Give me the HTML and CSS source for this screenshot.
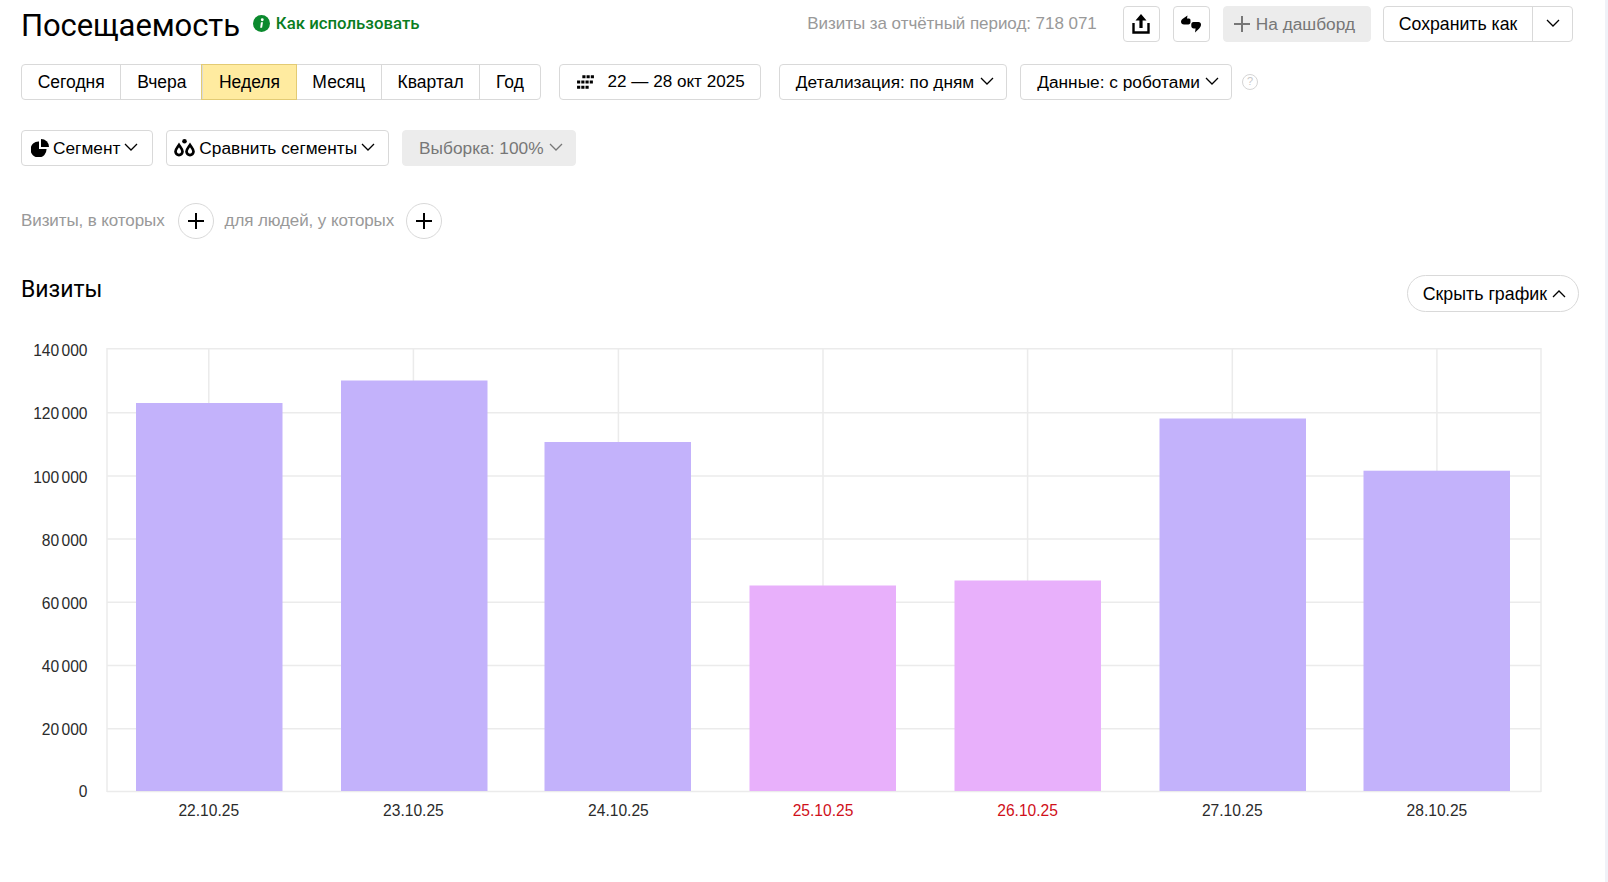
FILE: index.html
```html
<!DOCTYPE html>
<html lang="ru">
<head>
<meta charset="utf-8">
<title>Посещаемость</title>
<link rel="stylesheet" href="styles.css">
</head>
<body>
<svg class="defs" width="0" height="0" aria-hidden="true">
  <symbol id="chev" viewBox="0 0 14 8"><path d="M1 1l6 6 6-6" fill="none" stroke="currentColor" stroke-width="1.3"/></symbol>
  <symbol id="plus" viewBox="0 0 16 16"><path d="M8 0v16M0 8h16" fill="none" stroke="currentColor" stroke-width="2"/></symbol>
</svg>
<div class="layout">
<main class="page">
  <header class="row row-top">
    <h1 class="title">Посещаемость</h1>
    <a class="help">
      <svg class="help-ico" viewBox="0 0 18 18"><circle cx="9" cy="9" r="9" fill="#0b8a2e"/><circle cx="9.800" cy="5" r="1.500" fill="#fff"/><path d="M8.400 7.600h2.200l-1 5.800H7.600z" fill="#fff"/></svg>
      Как использовать
    </a>
    <span class="spacer"></span>
    <span class="stat">Визиты за отчётный период: 718 071</span>
    <button class="btn btn-icon">
      <svg class="ico" viewBox="0 0 18 20"><path d="M9 0L3.500 6.500H7.400V14h3.200V6.500h3.900z" fill="#000"/><path d="M1.500 9v9.500h15V9" fill="none" stroke="#000" stroke-width="2.400"/></svg>
    </button>
    <button class="btn btn-icon">
      <svg class="ico ico-quote" viewBox="0 0 20 18"><path d="M6.500 0.500L6 3.500H8c1 0 1.500.8 1.500 2V7c0 1.500-.8 2.500-2.200 2.500H3C1.200 9.500 0 8.300 0 6.700c0-1.500 1-2.700 2.500-3.500z" fill="#000"/><path d="M12.500 7H17.500C19 7 20 8 20 9.500c0 1.600-.8 3-2 4.200L14 17.500l.6-4H12.800c-1.500 0-2.500-1-2.500-2.500V9.300C10.300 8 11 7 12.500 7z" fill="#000"/></svg>
    </button>
    <button class="btn btn-muted btn-dash">
      <svg class="ico-plus" viewBox="0 0 16 16"><use href="#plus"/></svg>
      На дашборд
    </button>
    <div class="group group-save">
      <button class="seg seg-save">Сохранить как</button>
      <button class="seg seg-arrow"><svg class="chev" viewBox="0 0 14 8"><use href="#chev"/></svg></button>
    </div>
  </header>

  <div class="row row-period">
    <div class="group group-period">
      <button class="seg">Сегодня</button>
      <button class="seg">Вчера</button>
      <button class="seg seg-active">Неделя</button>
      <button class="seg">Месяц</button>
      <button class="seg">Квартал</button>
      <button class="seg">Год</button>
    </div>
    <button class="btn btn-date">
      <svg class="ico-cal" viewBox="0 0 18 13" fill="#000"><path d="M6 0h3v3H6zM10 0h3v3h-3zM14 0h3v3h-3zM1 5h3v3H1zM5 5h3v3H5zM9 5h3v3H9zM13 5h3v3h-3zM1 10h3v3H1zM5 10h3v3H5zM9 10h3v3H9z"/></svg>
      22 — 28 окт 2025
    </button>
    <button class="btn btn-detail">Детализация: по дням <svg class="chev" viewBox="0 0 14 8"><use href="#chev"/></svg></button>
    <button class="btn">Данные: с роботами <svg class="chev" viewBox="0 0 14 8"><use href="#chev"/></svg></button>
    <span class="question">?</span>
  </div>

  <div class="row row-segments">
    <button class="btn btn-seg">
      <svg class="ico-seg" viewBox="0 0 18 18"><path d="M8 2.500a8 8 0 1 0 7.500 7.500H8z" fill="#000"/><path d="M10 0a8 8 0 0 1 8 8h-8z" fill="#000"/></svg>
      Сегмент <svg class="chev" viewBox="0 0 14 8"><use href="#chev"/></svg>
    </button>
    <button class="btn btn-compare">
      <svg class="ico-drops" viewBox="0 0 21 18"><circle cx="10.500" cy="2.300" r="2.300" fill="#000"/><path d="M5 6c1.900 2.800 3.500 4.300 3.500 6.600a3.500 3.500 0 0 1-7 0C1.500 10.300 3.100 8.800 5 6z" fill="none" stroke="#000" stroke-width="2.700"/><path d="M16 6c1.900 2.800 3.500 4.300 3.500 6.600a3.500 3.500 0 0 1-7 0c0-2.300 1.600-3.800 3.500-6.600z" fill="none" stroke="#000" stroke-width="2.700"/></svg>
      Сравнить сегменты <svg class="chev" viewBox="0 0 14 8"><use href="#chev"/></svg>
    </button>
    <button class="btn btn-muted">Выборка: 100% <svg class="chev" viewBox="0 0 14 8"><use href="#chev"/></svg></button>
  </div>

  <div class="row row-conditions">
    <span class="cond">Визиты, в которых</span>
    <button class="round"><svg class="ico-plus" viewBox="0 0 16 16"><use href="#plus"/></svg></button>
    <span class="cond">для людей, у которых</span>
    <button class="round"><svg class="ico-plus" viewBox="0 0 16 16"><use href="#plus"/></svg></button>
  </div>

  <div class="row row-heading">
    <h2 class="heading">Визиты</h2>
    <button class="btn btn-pill">Скрыть график <svg class="chev chev-up" viewBox="0 0 14 8"><use href="#chev"/></svg></button>
  </div>

  <svg class="chart" viewBox="0 340 1605 530" width="1605" height="530">
    <g class="grid">
      <path d="M107 348.800H1541M107 412.700H1541M107 475.900H1541M107 539.100H1541M107 602.300H1541M107 665.500H1541M107 728.700H1541M107 791.500H1541"/>
      <path d="M107 348V792M208.800 348V792M413.400 348V792M618.400 348V792M823 348V792M1027.600 348V792M1232.300 348V792M1436.900 348V792M1541 348V792"/>
    </g>
    <g class="bars">
      <rect x="136" y="403" width="146.500" height="388"/>
      <rect x="341" y="380.500" width="146.500" height="410.500"/>
      <rect x="544.500" y="442" width="146.500" height="349"/>
      <rect class="off" x="749.500" y="585.500" width="146.500" height="205.500"/>
      <rect class="off" x="954.500" y="580.500" width="146.500" height="210.500"/>
      <rect x="1159.500" y="418.500" width="146.500" height="372.500"/>
      <rect x="1363.500" y="470.700" width="146.500" height="320.300"/>
    </g>
    <g class="ylabels">
      <text x="87.500" y="355.800">140 000</text>
      <text x="87.500" y="418.800">120 000</text>
      <text x="87.500" y="482.700">100 000</text>
      <text x="87.500" y="545.800">80 000</text>
      <text x="87.500" y="608.800">60 000</text>
      <text x="87.500" y="671.800">40 000</text>
      <text x="87.500" y="734.800">20 000</text>
      <text x="87.500" y="797">0</text>
    </g>
    <g class="xlabels">
      <text x="208.800" y="815.800">22.10.25</text>
      <text x="413.400" y="815.800">23.10.25</text>
      <text x="618.400" y="815.800">24.10.25</text>
      <text class="red" x="823" y="815.800">25.10.25</text>
      <text class="red" x="1027.600" y="815.800">26.10.25</text>
      <text x="1232.300" y="815.800">27.10.25</text>
      <text x="1436.900" y="815.800">28.10.25</text>
    </g>
  </svg>
</main>
<div class="edge"></div>
</div>
</body>
</html>
```

FILE: styles.css
```css
* { box-sizing: border-box; }
html, body { margin: 0; height: 100%; overflow: hidden; background: #fff; }
body { font: 17.300px "Liberation Sans", Arial, sans-serif; color: #000; }
.defs { position: absolute; }
.layout { display: flex; height: 882px; }
.page { flex: 0 0 1605px; width: 1605px; padding-top: 6px; }
.edge { flex: 1; background: #f0f2f8; }

.row { display: flex; align-items: center; padding-left: 21px; }
.row-top { height: 36px; padding-right: 32px; }
.row-period { margin-top: 22px; gap: 13px; }
.row-segments { margin-top: 30px; gap: 13px; }
.row-conditions { margin-top: 37px; height: 36px; }
.row-heading { margin-top: 36px; height: 37px; justify-content: space-between; padding-right: 26px; }

.title { margin: 4px 0 0; font-size: 31px; font-weight: 400; line-height: 36px; letter-spacing: -.1px; font-family: Roboto, "Liberation Sans", sans-serif; }
.help { display: flex; align-items: center; gap: 6px; margin: -2px 0 0 13px; font: 500 16.800px Roboto, sans-serif; color: #0a7d1f; }
.help-ico { width: 17px; height: 17px; }
.spacer { flex: 1; }
.stat { font-size: 17px; color: #999; margin-right: 26px; letter-spacing: -.05px; }

button { font: inherit; color: inherit; cursor: pointer; }
.btn, .group { height: 36px; border: 1px solid #d9d9d9; border-radius: 4px; background: #fff; }
.btn { display: flex; align-items: center; gap: 5px; padding: 0 12px 0 16px; white-space: nowrap; }
.btn-seg { padding: 0 14px 0 9px; gap: 4px; }
.btn-compare { padding: 0 13px 0 7px; gap: 4px; }
.btn-muted { background: #ececec; border-color: #ececec; color: #777; }
.btn-icon { width: 37px; padding: 0; justify-content: center; margin-right: 13px; }
.btn-dash { margin-right: 12px; padding: 0 15px 0 10px; gap: 6px; }
.btn-date { gap: 13px; padding: 0 15px 0 16px; margin-left: 5px; margin-right: 5px; font-size: 17.100px; }
.btn-detail { gap: 6px; }
.btn-pill { height: 37px; border-radius: 19px; padding: 2px 12px 0 15px; font-size: 17.800px; }

.group { display: flex; }
.seg { height: 34px; padding: 0 16px; border: 0; border-left: 1px solid #d9d9d9; background: none; white-space: nowrap; }
.seg:first-child { border-left: 0; border-radius: 3px 0 0 3px; }
.group-period .seg { font-size: 17.500px; padding: 0 15.700px; }
.group-save .seg { font-size: 17.700px; }
.seg-active { background: #ffeba0; outline: 1px solid #e3cb74; outline-offset: 0; position: relative; }
.seg-save { width: 148px; padding: 0; }
.seg-arrow { width: 40px; padding: 0; display: flex; align-items: center; justify-content: center; }

.chev { width: 14px; height: 8px; flex: none; margin-top: -2px; }
.chev-up { transform: rotate(180deg); }
.ico { width: 20px; height: 20px; }
.ico-quote { width: 20px; height: 18px; }
.ico-plus { width: 16px; height: 16px; }
.ico-cal { width: 19px; height: 14px; }
.ico-seg { width: 18px; height: 18px; }
.ico-drops { width: 21px; height: 18px; }
.question { width: 16px; height: 16px; margin-left: -3px; border: 1.500px solid #d5d5d5; border-radius: 50%; color: #c8c8c8; font-size: 11px; line-height: 13px; text-align: center; }

.cond { font-size: 17px; color: #999; letter-spacing: -.1px; }
.round { width: 36px; height: 36px; margin: 0 11px 0 13px; padding: 0; border: 1px solid #d9d9d9; border-radius: 50%; background: #fff; display: flex; align-items: center; justify-content: center; }
.round:last-child { margin-right: 0; margin-left: 12px; }
.heading { margin: -8px 0 0; font-size: 23px; font-weight: 400; font-family: Roboto, sans-serif; }

.chart { display: block; margin-top: 28px; }
.grid path { fill: none; stroke: #ebebeb; stroke-width: 1.500; }
.bars rect { fill: #c3b2fb; }
.bars rect.off { fill: #e8b0fb; }
.chart text { font: 15.600px "Liberation Sans", Arial, sans-serif; fill: #2b2b2b; word-spacing: -2px; }
.ylabels text { text-anchor: end; }
.xlabels text { text-anchor: middle; }
.chart .xlabels .red { fill: #d0101a; }
```
